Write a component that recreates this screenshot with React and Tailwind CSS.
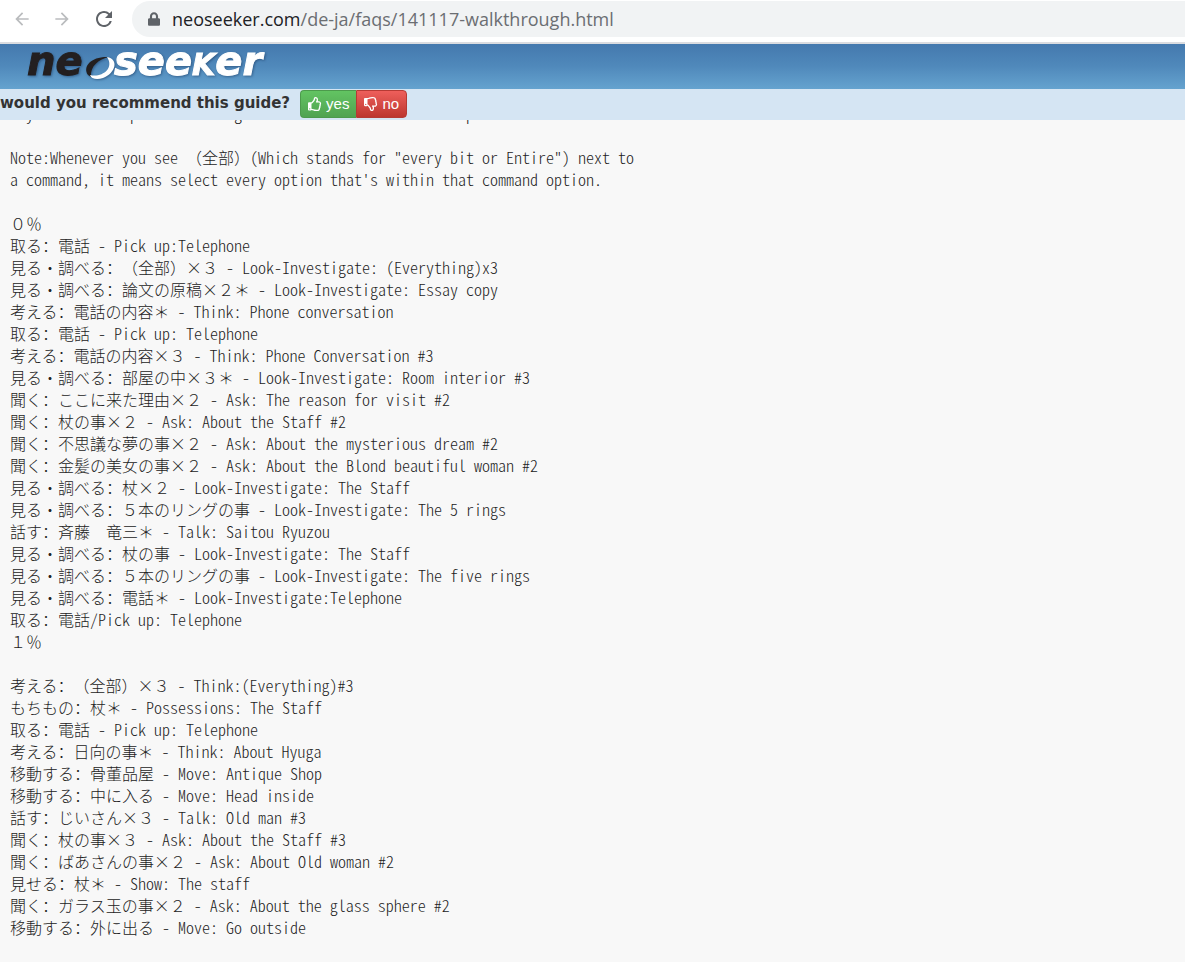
import React from 'react'
import { FaRegThumbsUp, FaRegThumbsDown, FaLock } from 'react-icons/fa'
import { MdArrowBack, MdArrowForward, MdRefresh } from 'react-icons/md'

const GUIDE_LINES = [
  '  y            p            g                            p',
  '',
  'Note:Whenever you see （全部）(Which stands for "every bit or Entire") next to',
  "a command, it means select every option that's within that command option.",
  '',
  '０％',
  '取る：電話 - Pick up:Telephone',
  '見る・調べる：（全部）×３ - Look-Investigate: (Everything)x3',
  '見る・調べる：論文の原稿×２＊ - Look-Investigate: Essay copy',
  '考える：電話の内容＊ - Think: Phone conversation',
  '取る：電話 - Pick up: Telephone',
  '考える：電話の内容×３ - Think: Phone Conversation #3',
  '見る・調べる：部屋の中×３＊ - Look-Investigate: Room interior #3',
  '聞く：ここに来た理由×２ - Ask: The reason for visit #2',
  '聞く：杖の事×２ - Ask: About the Staff #2',
  '聞く：不思議な夢の事×２ - Ask: About the mysterious dream #2',
  '聞く：金髪の美女の事×２ - Ask: About the Blond beautiful woman #2',
  '見る・調べる：杖×２ - Look-Investigate: The Staff',
  '見る・調べる：５本のリングの事 - Look-Investigate: The 5 rings',
  '話す：斉藤　竜三＊ - Talk: Saitou Ryuzou',
  '見る・調べる：杖の事 - Look-Investigate: The Staff',
  '見る・調べる：５本のリングの事 - Look-Investigate: The five rings',
  '見る・調べる：電話＊ - Look-Investigate:Telephone',
  '取る：電話/Pick up: Telephone',
  '１％',
  '',
  '考える：（全部）×３ - Think:(Everything)#3',
  'もちもの：杖＊ - Possessions: The Staff',
  '取る：電話 - Pick up: Telephone',
  '考える：日向の事＊ - Think: About Hyuga',
  '移動する：骨董品屋 - Move: Antique Shop',
  '移動する：中に入る - Move: Head inside',
  '話す：じいさん×３ - Talk: Old man #3',
  '聞く：杖の事×３ - Ask: About the Staff #3',
  '聞く：ばあさんの事×２ - Ask: About Old woman #2',
  '見せる：杖＊ - Show: The staff',
  '聞く：ガラス玉の事×２ - Ask: About the glass sphere #2',
  '移動する：外に出る - Move: Go outside',
]

function BrowserBar() {
  return (
    <div className="flex h-11 items-center border-b-2 border-[#dadce0] bg-white pl-3 pb-1">
      <button aria-label="Back" className="mr-5 text-[#babcbe]">
        <MdArrowBack className="h-5 w-5" />
      </button>
      <button aria-label="Forward" className="mr-5 text-[#babcbe]">
        <MdArrowForward className="h-5 w-5" />
      </button>
      <button aria-label="Reload" className="mr-4 text-[#5f6368]">
        <MdRefresh className="h-6 w-6" />
      </button>
      <div className="flex h-9 flex-1 items-center rounded-l-full bg-[#f1f3f4] pl-4">
        <FaLock className="mr-3 h-4 w-3 text-[#5f6368]" />
        <span className="font-['Open_Sans',sans-serif] text-[18px] text-[#6b6e72]">
          <span className="text-[#202124]">neoseeker.com</span>/de-ja/faqs/141117-walkthrough.html
        </span>
      </div>
    </div>
  )
}

function Logo() {
  return (
    <svg
      width="250"
      height="45"
      viewBox="0 0 250 45"
      className="overflow-visible font-['DejaVu_Sans',sans-serif] font-bold italic drop-shadow-[1px_1px_1px_rgba(20,50,90,0.5)]"
      role="img"
      aria-label="neoseeker"
    >
      <text x="5" y="31" fontSize="40" fill="#231f20" stroke="#231f20">ne</text>
      <path d="M66 31C60 22 70 12 87 13C77 15 68 22 69 33Z" fill="#231f20" />
      <path d="M85 13C97 15 94 29 81 34C75 36 69 35 68 31C79 34 93 25 85 13Z" fill="#fff" />
      <text x="92" y="31" fontSize="40" fill="#fff" stroke="#fff">
        see<tspan fontSize="30">K</tspan>er
      </text>
    </svg>
  )
}

function RecommendBar() {
  return (
    <div className="relative z-10 flex h-[31px] items-start bg-[#d5e5f3]">
      <span className="mr-[10px] font-['DejaVu_Sans',sans-serif] text-[15px] leading-7 font-bold text-[#333]">
        would you recommend this guide?
      </span>
      <div className="mt-px flex font-['Liberation_Sans',sans-serif] text-[15px] text-white">
        <button className="flex h-7 items-center gap-1 rounded-l border border-r-0 border-[#4c9a4c] bg-linear-to-b from-[#62c462] to-[#51a351] px-[7px]">
          <FaRegThumbsUp className="h-[14px] w-[14px]" />
          yes
        </button>
        <button className="flex h-7 items-center gap-1 rounded-r border border-[#b63a34] bg-linear-to-b from-[#ee5f5b] to-[#bd362f] px-[7px]">
          <FaRegThumbsDown className="h-[14px] w-[14px]" />
          no
        </button>
      </div>
    </div>
  )
}

// Latin runs use the half-width forms: 8px a letter against 16px for a kanji
function GuideLine({ text }) {
  const runs = text.match(/[\x20-\x7e]+|[^\x20-\x7e]+/g) || []
  return (
    <div className="h-[22px] whitespace-pre">
      {runs.map((run, i) => (
        <span key={i} className={run.charCodeAt(0) < 127 ? "[font-feature-settings:'hwid']" : ''}>
          {run}
        </span>
      ))}
    </div>
  )
}

export default function App() {
  return (
    <div className="min-h-screen bg-[#f8f8f8]">
      <BrowserBar />
      <header className="flex h-[45px] items-center bg-linear-to-b from-[#4479ae] via-[#5089bb] to-[#65a3cf] pl-[22px]">
        <Logo />
      </header>
      <RecommendBar />
      <main className="-mt-[18px] px-[10px] pb-6 font-['Noto_Sans_CJK_SC',sans-serif] text-base leading-[22px] font-light text-[#222] [font-variant-ligatures:none] [text-spacing-trim:space-all] [text-autospace:no-autospace]">
        {GUIDE_LINES.map((line, i) => (
          <GuideLine key={i} text={line} />
        ))}
      </main>
    </div>
  )
}
